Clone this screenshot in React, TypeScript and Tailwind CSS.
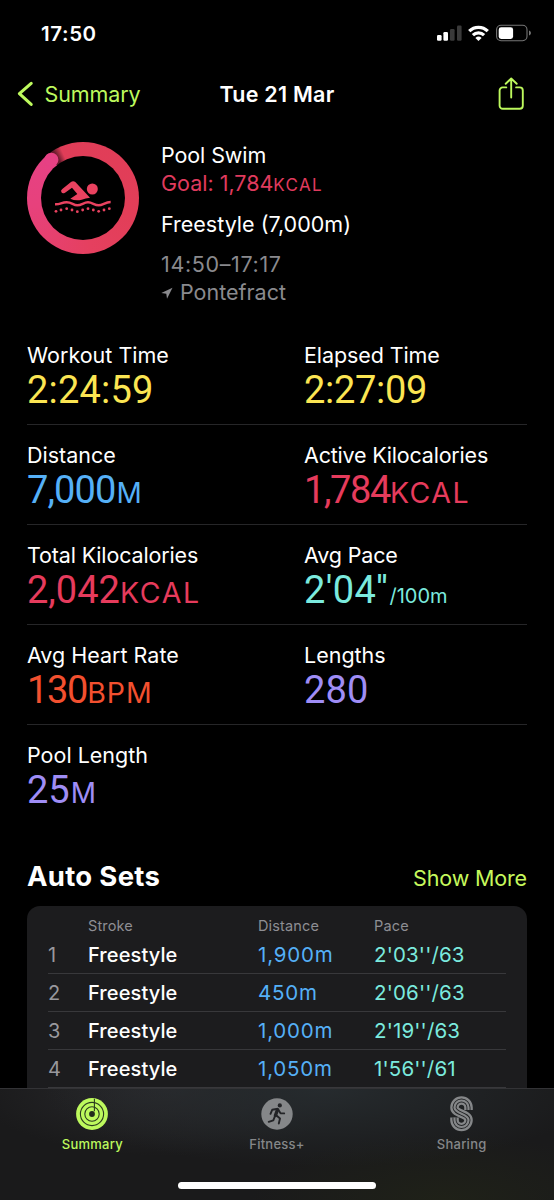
import { clsx } from 'clsx';

interface Metric {
  label: string;
  value: string;
  unit?: string;
  color: string;
  labelClass?: string;
  valueClass?: string;
  unitClass?: string;
}

interface SetRow {
  stroke: string;
  distance: string;
  pace: string;
}

const METRICS: Metric[][] = [
  [
    { label: 'Workout Time', value: '2:24:59', color: 'text-[#fbe552]', valueClass: 'tracking-[0.2px]' },
    { label: 'Elapsed Time', value: '2:27:09', color: 'text-[#fbe552]', labelClass: 'tracking-[-0.1px]', valueClass: 'tracking-[-0.3px]' },
  ],
  [
    { label: 'Distance', value: '7,000', unit: 'M', color: 'text-[#55b0f7]', valueClass: 'tracking-[-0.9px]', unitClass: 'ml-px text-[28px]' },
    {
      label: 'Active Kilocalories',
      value: '1,784',
      unit: 'KCAL',
      color: 'text-[#e63b5c]',
      labelClass: 'tracking-[-0.2px]',
      valueClass: 'tracking-[-1.4px]',
      unitClass: 'text-[28.5px] tracking-[1.5px]',
    },
  ],
  [
    {
      label: 'Total Kilocalories',
      value: '2,042',
      unit: 'KCAL',
      color: 'text-[#e63b5c]',
      labelClass: 'tracking-[-0.15px]',
      unitClass: 'text-[28.5px] tracking-[1.7px]',
    },
    {
      label: 'Avg Pace',
      value: "2'04''",
      unit: '/100m',
      color: 'text-[#7beade]',
      labelClass: 'tracking-[-0.15px]',
      valueClass: 'tracking-[0.4px]',
      unitClass: 'ml-px text-[20px]',
    },
  ],
  [
    {
      label: 'Avg Heart Rate',
      value: '130',
      unit: 'BPM',
      color: 'text-[#f3502f]',
      valueClass: 'tracking-[-1.3px]',
      unitClass: 'text-[28.5px] tracking-[1px]',
    },
    { label: 'Lengths', value: '280', color: 'text-[#9f8df6]', valueClass: 'tracking-[0.2px]' },
  ],
  [{ label: 'Pool Length', value: '25', unit: 'M', color: 'text-[#9f8df6]', unitClass: 'ml-px text-[28px]' }],
];

const SETS: SetRow[] = [
  { stroke: 'Freestyle', distance: '1,900m', pace: "2'03''/63" },
  { stroke: 'Freestyle', distance: '450m', pace: "2'06''/63" },
  { stroke: 'Freestyle', distance: '1,000m', pace: "2'19''/63" },
  { stroke: 'Freestyle', distance: '1,050m', pace: "1'56''/61" },
];

const DOTS = [
  [139, 244], [154, 240], [171, 236], [187, 240], [203, 245], [219, 240],
  [235, 236], [251, 240], [267, 244], [283, 240], [299, 236],
];

function StatusBar() {
  return (
    <div className="flex h-[62px] items-start justify-between pl-[41px] pr-[22px] pt-[19px]">
      <span className="text-[20.5px] font-semibold leading-[29px] tracking-[0.6px]">17:50</span>
      <svg width="96" height="18" viewBox="436 24 96 18" className="mt-[5px]">
        <g fill="#fff">
          <rect x="437" y="35" width="4.6" height="5.8" rx="1.2" />
          <rect x="443.4" y="32" width="4.6" height="8.8" rx="1.2" />
          <g fill="#3a3a3a">
            <rect x="450" y="29" width="4.6" height="11.8" rx="1.2" />
            <rect x="457" y="25.5" width="4.6" height="15.3" rx="1.2" />
          </g>
          <path d="M478.5 41l-3.1-3.1a4.5 4.5 0 0 1 6.2 0z" />
        </g>
        <g fill="none" stroke="#fff" strokeWidth="3.2">
          <path d="M469.2 31.2a13.2 13.2 0 0 1 18.6 0" />
          <path d="M472.9 35.2a8 8 0 0 1 11.2 0" />
        </g>
        <rect x="496.6" y="25.3" width="30.4" height="15.4" rx="4.4" fill="none" stroke="#757575" strokeWidth="1.1" />
        <rect x="498.7" y="27.3" width="14.4" height="11.6" rx="2.4" fill="#fff" />
        <path d="M529 30.6c2.6.7 2.6 4.3 0 5z" fill="#757575" />
      </svg>
    </div>
  );
}

function NavBar() {
  return (
    <header className="grid h-[64px] grid-cols-3 items-center">
      <button className="flex items-center gap-[10.5px] pl-[17px] text-left text-[#bdf95d]">
        <svg width="17" height="26" viewBox="0 0 17 26" fill="none" stroke="currentColor" strokeWidth="3.1" strokeLinecap="round" strokeLinejoin="round">
          <path d="M14.2 2.3L2.4 12.7l11.8 10.7" />
        </svg>
        <span className="text-[21.5px] leading-[28px] tracking-[-0.1px]">Summary</span>
      </button>
      <h1 className="whitespace-nowrap text-center text-[21.5px] font-semibold leading-[28px] tracking-[0.25px]">Tue 21 Mar</h1>
      <svg width="28" height="34" viewBox="497 76.5 28 34" fill="none" stroke="#bdf95d" strokeWidth="1.9" strokeLinecap="round" strokeLinejoin="round" className="ml-auto mr-[29px]">
        <path d="M506.3 86.9h-3.6a3.1 3.1 0 0 0-3.1 3.1v15.2a3.1 3.1 0 0 0 3.1 3.1h17a3.1 3.1 0 0 0 3.1-3.1V90a3.1 3.1 0 0 0-3.1-3.1h-3.6" />
        <path d="M511.2 97V78.3M505.7 83.3l5.5-5.3 5.5 5.3" />
      </svg>
    </header>
  );
}

function GoalRing() {
  return (
    <div className="relative flex size-[112px] shrink-0 items-center justify-center rounded-full bg-[conic-gradient(from_-39deg,#5a1827_0deg,#6b1c2e_7deg,#e03d58_15deg,#e23e58_150deg,#e5405f_210deg,#e7417c_300deg,#e64184_360deg)]">
      <div className="flex size-[84px] items-center justify-center rounded-full bg-black">
        <svg width="60" height="37" viewBox="130 147 180 111" fill="#ea4260" className="-mt-[2px]">
          <circle cx="248" cy="177" r="16.5" />
          <path d="M197 156L241 203Q228 204 216 209Q198 214 182 206L203 192L187 173L166 188Q158 192 155 186Q152 181 158 177L183 157Q190 151 197 156Z" />
          <path d="M136 223C152 224 155 217 171 217S190 226 203 226S222 217 235 217S254 226 267 226S286 216 303 216" fill="none" stroke="#ea4260" strokeWidth="7.5" />
          {DOTS.map(([x, y]) => (
            <circle key={x} cx={x} cy={y} r="4.2" />
          ))}
        </svg>
      </div>
      <svg viewBox="0 0 112 112" className="absolute inset-0">
        <circle cx="24.4" cy="17.8" r="7" fill="#e64184" />
      </svg>
    </div>
  );
}

function WorkoutInfo() {
  return (
    <section className="flex h-[199px] pl-[27px] pt-[16px]">
      <GoalRing />
      <div className="ml-[22px] text-[21.5px] leading-[27px]">
        <p className="tracking-[-0.1px]">Pool Swim</p>
        <p className="mt-px h-[27px] text-[#e03b5e]">
          Goal: 1,784<span className="text-[17px] leading-none tracking-[1.3px]">KCAL</span>
        </p>
        <p className="mt-[14px]">Freestyle (7,000m)</p>
        <p className="mt-[13px] tracking-[0.65px] text-[#8a8a8e]">14:50–17:17</p>
        <p className="mt-px flex items-center text-[#8a8a8e]">
          <svg width="12" height="12" viewBox="0 0 12 12" fill="currentColor" className="mr-[7px]">
            <path d="M11.5.8L.3 6l5 .7.7 5z" />
          </svg>
          Pontefract
        </p>
      </div>
    </section>
  );
}

function MetricCell({ metric }: { metric: Metric }) {
  return (
    <div className="w-[277px] shrink-0 pt-[16px]">
      <p className={clsx('text-[21.5px] leading-[29px]', metric.labelClass)}>{metric.label}</p>
      <p className={clsx('flex items-baseline whitespace-nowrap leading-[40px]', metric.color)}>
        <span className={clsx("font-['Roboto',sans-serif] text-[38px]", metric.valueClass)}>{metric.value}</span>
        {metric.unit && <span className={metric.unitClass}>{metric.unit}</span>}
      </p>
    </div>
  );
}

function AutoSets() {
  return (
    <section className="px-[27px]">
      <div className="flex h-[81px] items-baseline justify-between pt-[33px]">
        <h2 className="text-[27.5px] font-bold leading-[36px] tracking-[0.3px]">Auto Sets</h2>
        <button className="text-[21.5px] tracking-[-0.15px] text-[#c6f85c]">Show More</button>
      </div>
      <div className="h-[200px] rounded-t-[13px] bg-[#1c1c1e] px-[21px]">
        <div className="grid grid-cols-[40px_169px_117px_1fr] pt-[10px] text-[14.5px] leading-[20px] tracking-[0.15px] text-[#8e8e93]">
          <span className="col-start-2">Stroke</span>
          <span className="pl-px">Distance</span>
          <span>Pace</span>
        </div>
        {SETS.map((row, i) => (
          <div
            key={i}
            className="grid h-[38px] grid-cols-[40px_169px_117px_1fr] items-center border-b border-[#38383b] text-[20px] leading-[28px]"
          >
            <span className="text-[#98989d]">{i + 1}</span>
            <span className="font-medium tracking-[0.1px]">{row.stroke}</span>
            <span className="pl-px text-[20.5px] tracking-[0.8px] text-[#55b0f7]">{row.distance}</span>
            <span className="text-[20.5px] tracking-[0.15px] text-[#7beade]">{row.pace}</span>
          </div>
        ))}
      </div>
    </section>
  );
}

function RingsIcon() {
  return (
    <svg width="32" height="32" viewBox="0 0 32 32" fill="none">
      <circle cx="16" cy="16" r="15.9" fill="#bdf95d" />
      <g stroke="#2b3a20" strokeWidth="1.1">
        <circle cx="16" cy="16" r="11.6" />
        <circle cx="16" cy="16" r="7.2" />
        <path d="M18.4.8v12.5" />
      </g>
      <circle cx="16" cy="16" r="2.9" fill="#222c1c" />
    </svg>
  );
}

function RunnerIcon() {
  return (
    <svg width="32" height="32" viewBox="0 0 32 32">
      <circle cx="16" cy="16" r="15.7" fill="#858789" />
      <circle cx="18.8" cy="7.4" r="2.1" fill="#232427" />
      <g fill="none" stroke="#232427" strokeLinecap="round" strokeLinejoin="round">
        <path d="M16.6 11.5l-2.2 6" strokeWidth="3.4" />
        <path d="M15.5 11l-4.3.8-1.7 4M17.5 12l2 3.2 3.7.2M15.5 17.5l3.5 3-1.2 5M13.8 18.5l-1.5 3.8-4.6 1.5" strokeWidth="1.9" />
      </g>
    </svg>
  );
}

// both bowls share one centre line, the layered strokes split it into parallel lines
const S_PATH = 'M18.5 14V11.5A7 7 0 0 0 4.5 11.5C4.5 18 18.5 17.5 18.5 24A7 7 0 0 1 4.5 24V21.5';

function SharingIcon() {
  return (
    <svg width="23" height="36" viewBox="0 0 23 36" fill="none">
      <path d={S_PATH} stroke="#858789" strokeWidth="8.6" />
      <path d={S_PATH} stroke="#222426" strokeWidth="4" />
      <path d={S_PATH} stroke="#858789" strokeWidth="2.2" />
    </svg>
  );
}

const TABS = [
  { label: 'Summary', icon: <RingsIcon />, active: true },
  { label: 'Fitness+', icon: <RunnerIcon />, active: false },
  { label: 'Sharing', icon: <SharingIcon />, active: false },
];

function TabBar() {
  return (
    <nav className="flex h-[112px] shrink-0 flex-col items-center justify-between border-t border-[#333336] bg-[#1a1a1b] bg-[radial-gradient(ellipse_50%_70%_at_58%_0%,#262b2e,transparent),radial-gradient(ellipse_35%_60%_at_30%_0%,#29292c,transparent),radial-gradient(ellipse_35%_60%_at_80%_100%,#1f2118,transparent)] pb-[11px]">
      <div className="grid w-full grid-cols-3">
        {TABS.map((tab) => (
          <div key={tab.label} className={clsx('flex flex-col items-center', tab.active ? 'text-[#bdf95d]' : 'text-[#858789]')}>
            <div className="flex h-[46px] items-center pt-[4px]">{tab.icon}</div>
            <span className="text-[13px] font-medium leading-[18px] tracking-[0.25px]">{tab.label}</span>
          </div>
        ))}
      </div>
      <div className="h-[7px] w-[198px] rounded-full bg-white" />
    </nav>
  );
}

export default function App() {
  return (
    <div className="flex h-[1200px] w-[554px] flex-col overflow-hidden bg-black font-['Inter',sans-serif] text-white">
      <StatusBar />
      <NavBar />
      <main className="h-[962px] shrink-0 overflow-hidden">
        <WorkoutInfo />
        <section className="px-[27px]">
          {METRICS.map((row, i) => (
            <div key={i} className={clsx('flex h-[100px]', i < METRICS.length - 1 && 'border-b border-[#262628]')}>
              {row.map((m) => (
                <MetricCell key={m.label} metric={m} />
              ))}
            </div>
          ))}
        </section>
        <AutoSets />
      </main>
      <TabBar />
    </div>
  );
}
